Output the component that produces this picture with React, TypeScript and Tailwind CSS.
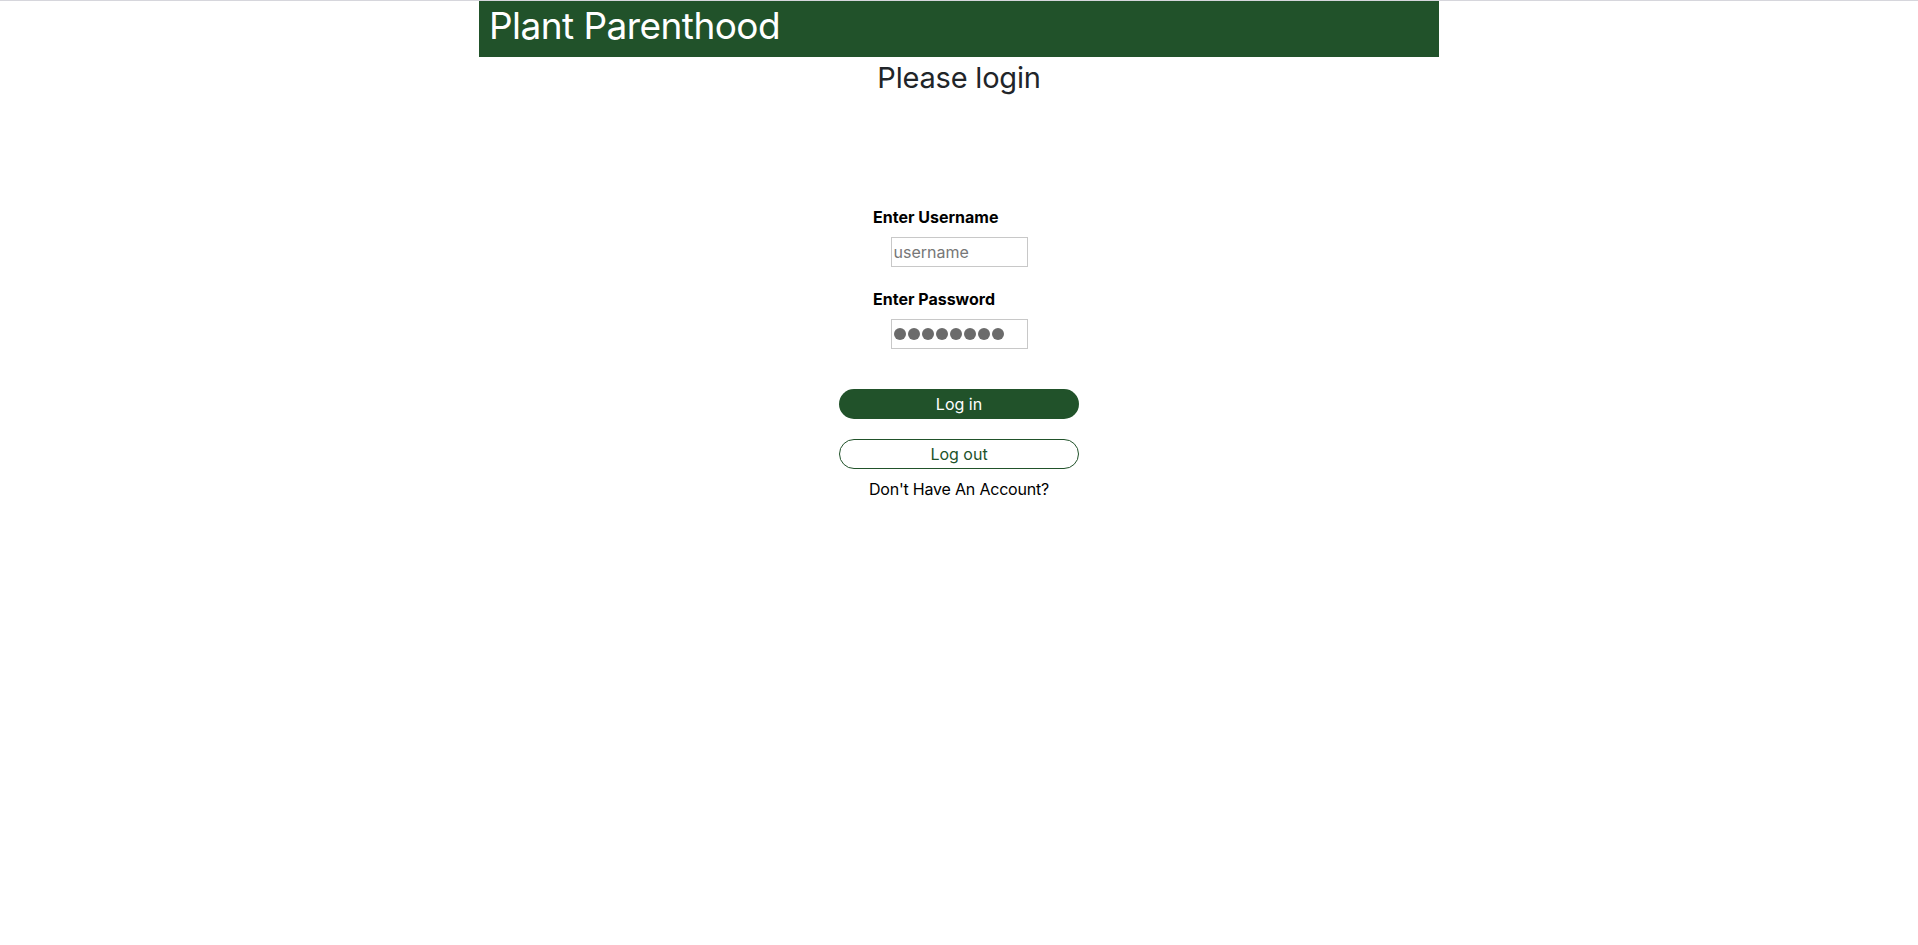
import React from 'react';

const App = () => {
  const dots = [0, 1, 2, 3, 4, 5, 6, 7];

  return (
    <div className="min-h-[945px] border-t border-[#d6d6dc] bg-white font-['Inter',sans-serif]">
      {/* Header */}
      <header className="mx-auto h-[56px] w-[960px] bg-[#21522a] px-[10px]">
        <h1 className="text-[37px] leading-[50px] tracking-[-0.55px] text-white">Plant Parenthood</h1>
      </header>

      <h2 className="mt-[3px] text-center text-[29px] leading-[36px] tracking-[-0.2px] text-[#212529]">Please login</h2>

      {/* Login form */}
      <form className="mx-auto mt-[111px] flex w-[240px] flex-col" onSubmit={(e) => e.preventDefault()}>
        <label className="pl-[34px] text-[16px] font-bold leading-[20px] text-black">Enter Username</label>
        <input
          type="text"
          placeholder="username"
          className="mx-auto mt-[10px] h-[30px] w-[137px] border border-[#c8c8c8] px-[2px] text-[16px] text-black placeholder:text-[#777] outline-none"
        />

        <label className="mt-[22px] pl-[34px] text-[16px] font-bold leading-[20px] text-black">Enter Password</label>
        <div className="mx-auto mt-[10px] flex h-[30px] w-[137px] items-center gap-[2px] border border-[#c8c8c8] px-[2px]">
          {dots.map((d) => (
            <span key={d} className="h-[12px] w-[12px] rounded-full bg-[#6b6b6b]" />
          ))}
        </div>

        <button
          type="submit"
          className="mt-[40px] h-[30px] w-[240px] rounded-full bg-[#21522a] text-[16px] text-white"
        >
          Log in
        </button>
        <button
          type="button"
          className="mt-[20px] h-[30px] w-[240px] rounded-full border border-[#21522a] bg-white text-[16px] text-[#21522a]"
        >
          Log out
        </button>
        <p className="mt-[10px] text-center text-[16px] leading-[20px] tracking-[-0.2px] text-black">Don't Have An Account?</p>
      </form>
    </div>
  );
};

export default App;
